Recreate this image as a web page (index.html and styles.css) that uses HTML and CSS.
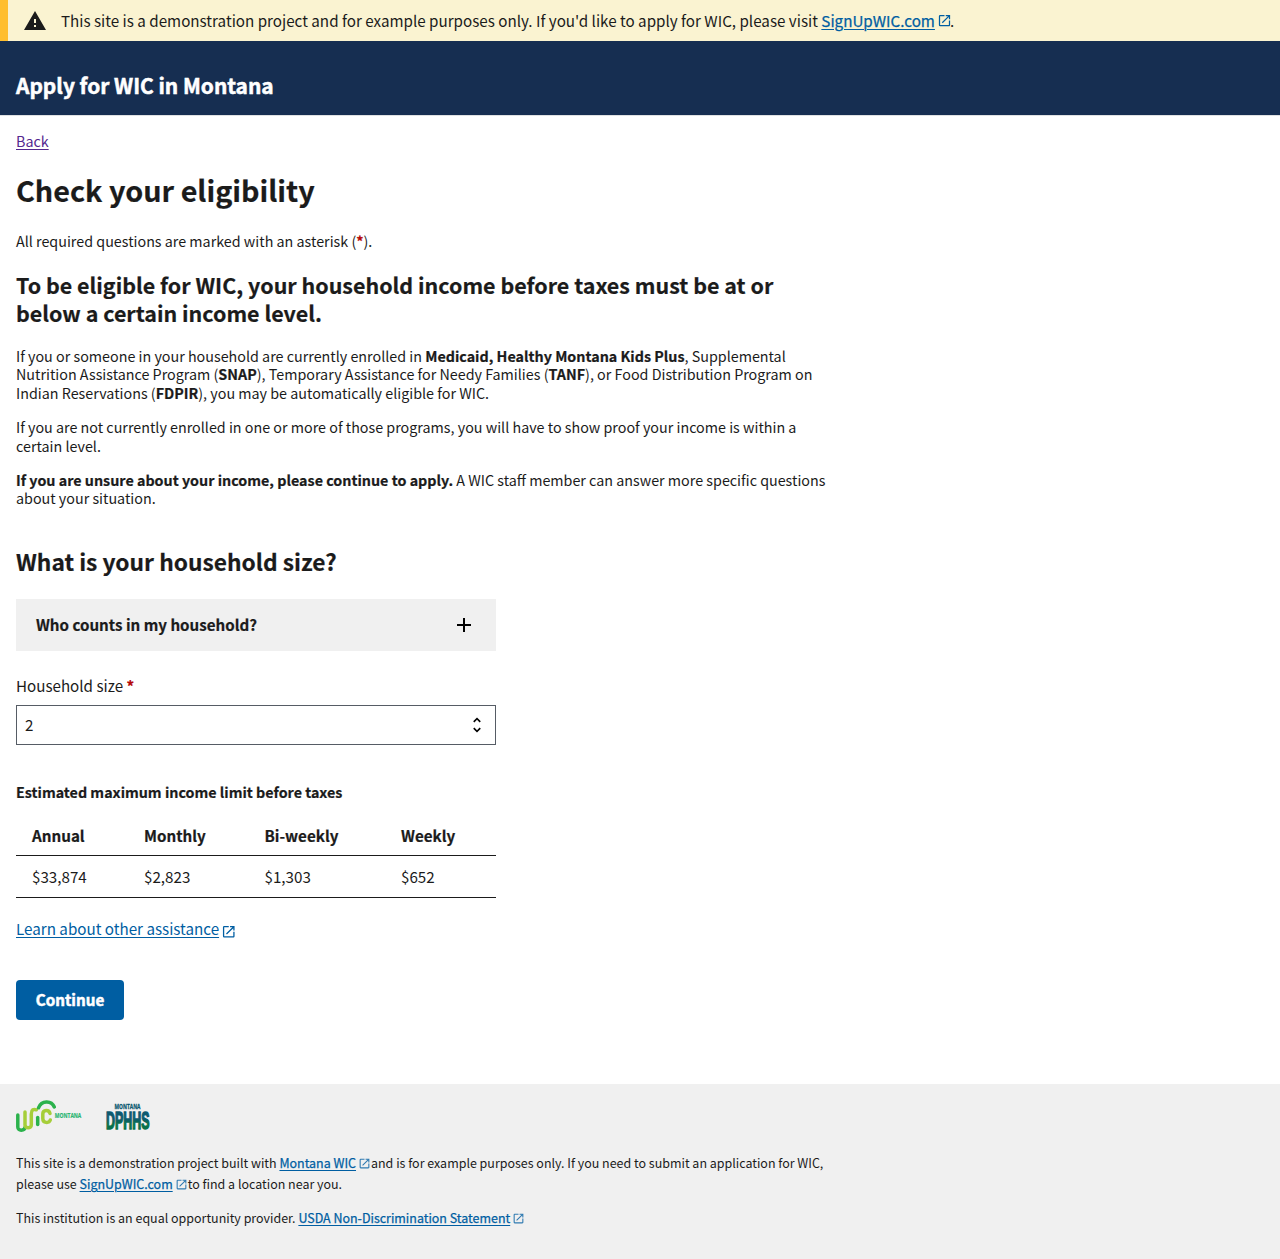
FILE: index.html
```html
<!DOCTYPE html>
<html lang="en">
<head>
<meta charset="utf-8">
<title>Check your eligibility</title>
<link rel="stylesheet" href="styles.css">
</head>
<body>
<svg class="sprite" aria-hidden="true">
  <symbol id="launch" viewBox="0 0 24 24"><path d="M19 19H5V5h7V3H5a2 2 0 0 0-2 2v14a2 2 0 0 0 2 2h14c1.1 0 2-.9 2-2v-7h-2v7zM14 3v2h3.590l-9.830 9.830 1.410 1.410L19 6.410V10h2V3h-7z"/></symbol>
</svg>

<aside class="alert">
  <svg class="alert-icon" viewBox="0 0 24 24"><path d="M1 21h22L12 2 1 21zm12-3h-2v-2h2v2zm0-4h-2v-4h2v4z"/></svg>
  <p class="alert-text">This site is a demonstration project and for example purposes only. If you'd like to apply for WIC, please visit <a class="link" href="#">SignUpWIC.com</a><svg class="launch launch-alert"><use href="#launch"/></svg>.</p>
</aside>

<header class="header"><span class="site-title">Apply for WIC in Montana</span></header>

<main class="main">
  <a class="back" href="#">Back</a>
  <h1 class="title">Check your eligibility</h1>
  <p class="text intro">All required questions are marked with an asterisk (<b class="required">*</b>).</p>
  <h2 class="heading lead">To be eligible for WIC, your household income before taxes must be at or below a certain income level.</h2>
  <p class="text">If you or someone in your household are currently enrolled in <b>Medicaid, Healthy Montana Kids Plus</b>, Supplemental Nutrition Assistance Program (<b>SNAP</b>), Temporary Assistance for Needy Families (<b>TANF</b>), or Food Distribution Program on Indian Reservations (<b>FDPIR</b>), you may be automatically eligible for WIC.</p>
  <p class="text">If you are not currently enrolled in one or more of those programs, you will have to show proof your income is within a certain level.</p>
  <p class="text"><b>If you are unsure about your income, please continue to apply.</b> A WIC staff member can answer more specific questions about your situation.</p>

  <form class="form">
    <h2 class="heading question">What is your household size?</h2>
    <button class="accordion" type="button"><span class="raised">Who counts in my household?</span><svg class="plus" viewBox="0 0 24 24"><path d="M19 13h-6v6h-2v-6H5v-2h6V5h2v6h6v2z"/></svg></button>
    <label class="label" for="size">Household size <b class="required">*</b></label>
    <div class="select" id="size" tabindex="0"><span class="raised">2</span><svg class="unfold" viewBox="0 0 24 24"><path d="M12 5.830 15.170 9l1.410-1.410L12 3 7.410 7.590 8.830 9 12 5.830zm0 12.340L8.830 15l-1.410 1.410L12 21l4.590-4.590L15.170 15 12 18.170z"/></svg></div>
    <h3 class="caption">Estimated maximum income limit before taxes</h3>
    <table class="table">
      <colgroup><col class="c1"><col class="c2"><col class="c3"><col></colgroup>
      <thead><tr><th>Annual</th><th>Monthly</th><th>Bi-weekly</th><th>Weekly</th></tr></thead>
      <tbody><tr><td>$33,874</td><td>$2,823</td><td>$1,303</td><td>$652</td></tr></tbody>
    </table>
    <p class="assist"><a class="link" href="#">Learn about other assistance</a><svg class="launch launch-assist"><use href="#launch"/></svg></p>
    <button class="continue" type="button">Continue</button>
  </form>
</main>

<footer class="footer">
  <div class="logos">
    <svg class="logo-wic" viewBox="0 0 66 32" role="img" aria-label="WIC Montana">
      <g fill="none" stroke-width="3.500" stroke-linecap="round">
        <path stroke="#2bb24c" d="M1.800 15V27c0 4.500 6.800 4 7.400 0"/>
        <path stroke="#a6ce39" d="M9 12V25c0 3.800 6.300 3.800 6.300 0V14c0-4.500 2.500-5.200 5-4.200"/>
        <path stroke="#2bb24c" d="M21.700 17.500V24.500"/>
        <path stroke="#a6ce39" d="M34 13.500c-.8-4-7.200-4-7.200.5v4.500c0 4.800 6.200 5 7.500 1.500"/>
        <path stroke="#2bb24c" d="M22.500 7.800C25.500 .2 35.500 .2 38.300 7"/>
      </g>
      <text class="wic-state" x="38.800" y="17.500" textLength="26.500" lengthAdjust="spacingAndGlyphs">MONTANA</text>
    </svg>
    <svg class="logo-dphhs" viewBox="0 0 48 32" role="img" aria-label="Montana DPHHS">
      <defs><linearGradient id="dp" x1="0" y1="0" x2="0" y2="1"><stop offset=".45" stop-color="#0d5a70"/><stop offset=".65" stop-color="#08704a"/></linearGradient></defs>
      <text class="dp-state" x="9.500" y="9" textLength="26" lengthAdjust="spacingAndGlyphs">MONTANA</text>
      <text class="dp-name" x="1" y="28.500" textLength="43.500" lengthAdjust="spacingAndGlyphs">DPHHS</text>
    </svg>
  </div>
  <p class="foot">This site is a demonstration project built with <a class="link" href="#">Montana WIC</a><svg class="launch launch-foot"><use href="#launch"/></svg>and is for example purposes only. If you need to submit an application for WIC, please use <a class="link" href="#">SignUpWIC.com</a><svg class="launch launch-foot"><use href="#launch"/></svg>to find a location near you.</p>
  <p class="foot">This institution is an equal opportunity provider. <a class="link" href="#">USDA Non-Discrimination Statement</a><svg class="launch launch-foot"><use href="#launch"/></svg></p>
</footer>
</body>
</html>
```

FILE: styles.css
```css
* { box-sizing: border-box; }
body {
  margin: 0;
  color: #1b1b1b;
  background: #fff;
  font-family: "Noto Sans CJK SC", "Open Sans", sans-serif;
  font-size: 14.32px;
  line-height: 18.4px;
}
h1, h2, h3, p { margin: 0; }
h1, h2, h3, th, b, .accordion { -webkit-text-stroke: .2px; }
button { font: inherit; color: inherit; border: 0; cursor: pointer; }
b { font-weight: 700; }
.sprite { display: none; }
.link { color: #005ea2; text-underline-offset: 2px; text-decoration-thickness: 1px; }
.alert .link, .foot .link { -webkit-text-stroke: .25px #005ea2; }
.launch { fill: #005ea2; }
.required { color: #b50909; }
.raised { padding-bottom: 2px; }

.alert {
  display: flex;
  align-items: center;
  height: 41px;
  padding-left: 15px;
  border-left: 8px solid #ffbe2e;
  background: #faf3d1;
}
.alert-icon { width: 24px; height: 24px; margin-right: 14px; fill: #1b1b1b; }
.alert-text { padding-bottom: 2px; font-size: 15.2px; line-height: 24px; white-space: nowrap; }
.launch-alert { width: 15px; height: 15px; margin: 0 -2px 0 2px; vertical-align: -1px; }

.header {
  height: 75px;
  padding: 30px 16px 0;
  border-bottom: 1px solid #dfe1e2;
  background: #162e51;
}
.site-title { display: block; color: #fff; font-size: 20.9px; font-weight: 700; line-height: 28px; -webkit-text-stroke: .5px #fff; }

.main { width: 853px; padding: 16px 16px 64px; }
.back { display: block; width: max-content; color: #54278f; text-underline-offset: 2px; text-decoration-thickness: 1px; }
.title { margin-top: 21px; font-size: 28.75px; font-weight: 700; line-height: 37px; }
.intro { margin-top: 24px; }
.heading { font-size: 21.46px; font-weight: 700; line-height: 28px; }
.lead { margin: 20px 0 20.200px; }
.text + .text { margin-top: 16px; }

.form { width: 480px; }
.question { margin-top: 40px; font-size: 22.75px; }
.accordion {
  display: flex;
  align-items: center;
  justify-content: space-between;
  width: 100%;
  height: 52px;
  margin-top: 23px;
  padding: 0 20px;
  background: #f0f0f0;
  font-size: 15.15px;
  font-weight: 700;
}
.plus { width: 24px; height: 24px; }
.label { display: block; margin-top: 23px; font-size: 15.17px; line-height: 22px; }
.select {
  display: flex;
  align-items: center;
  justify-content: space-between;
  height: 40px;
  margin-top: 9px;
  padding: 0 8px;
  border: 1px solid #565c65;
  font-size: 15.19px;
}
.unfold { width: 20px; height: 20px; }
.caption { margin-top: 38px; font-size: 14.31px; font-weight: 700; line-height: 18px; }
.table {
  width: 480px;
  margin-top: 12px;
  border-collapse: collapse;
  table-layout: fixed;
  font-size: 15.19px;
  line-height: 22px;
  text-align: left;
}
.table th, .table td { height: 42px; padding: 0 0 0 16px; border-bottom: 1px solid #1b1b1b; }
.table th { height: 43px; padding-top: 1px; }
.table td { padding-bottom: 2px; }
.c1 { width: 112px; }
.c2 { width: 120.5px; }
.c3 { width: 136.5px; }
.assist { margin-top: 19px; font-size: 15.19px; line-height: 22px; }
.launch-assist { width: 15.5px; height: 15.5px; margin-left: 2px; vertical-align: -4px; }
.continue {
  display: block;
  width: 108px;
  height: 40px;
  margin-top: 41px;
  padding: 0 0 2px;
  border-radius: 4px;
  background: #005ea2;
  color: #fff;
  font-size: 15.19px;
  font-weight: 700;
  -webkit-text-stroke: .5px #fff;
}

.footer { height: 175px; padding: 16px; background: #f0f0f0; }
.logos { display: flex; gap: 23px; height: 32px; margin-bottom: 21px; }
.logo-wic { width: 66px; height: 32px; overflow: visible; }
.logo-dphhs { width: 48px; height: 32px; overflow: visible; }
.wic-state { fill: #2bb673; font: 700 6.5px "Open Sans", sans-serif; stroke: #2bb673; stroke-width: .2px; }
.dp-state { fill: #0d5a70; font: 700 7px "Open Sans", sans-serif; stroke: #0d5a70; stroke-width: .3px; }
.dp-name { fill: url(#dp); font: 700 24px "Liberation Sans", sans-serif; stroke: url(#dp); stroke-width: 1.5px; }
.foot { width: 821px; font-size: 12.46px; line-height: 21px; }
.foot + .foot { margin-top: 13px; }
.launch-foot { width: 13px; height: 13px; margin-left: 2px; vertical-align: -2px; opacity: .8; }
```
